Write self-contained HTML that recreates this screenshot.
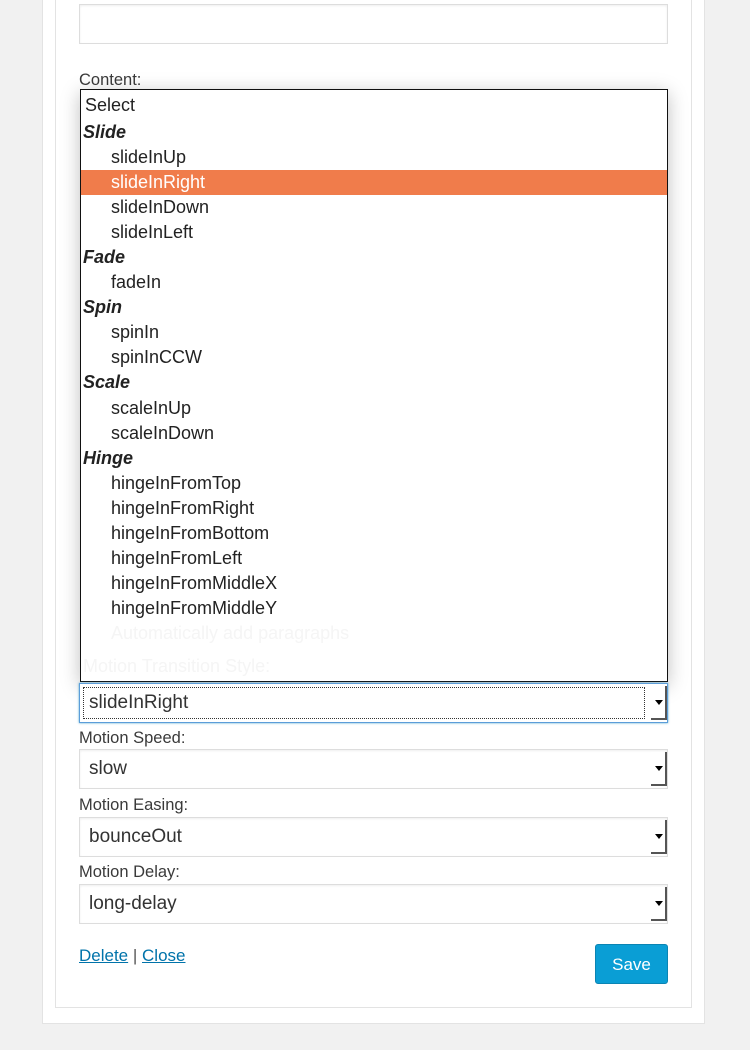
<!DOCTYPE html>
<html><head><meta charset="utf-8"><style>
body{margin:0;width:750px;height:1050px;background:#f1f1f1;font-family:"Liberation Sans",sans-serif;color:#333;position:relative;overflow:hidden}
.a{position:absolute}
.outer{left:42px;top:-5px;width:663px;height:1029px;background:#fff;border:1px solid #e3e3e3;box-sizing:border-box}
.inner{left:55px;top:-5px;width:637px;height:1013px;background:#fff;border:1px solid #e3e3e3;box-sizing:border-box}
.inp{left:79px;width:589px;height:40px;border:1px solid #ddd;box-sizing:border-box;background:#fff;box-shadow:inset 0 1px 2px rgba(0,0,0,.07)}
.lbl{left:79px;font-size:16.5px;color:#3a3a3a}
.sel{font-size:19px;color:#333;padding-left:9px;line-height:38px}
.arr{position:absolute;right:0;top:2px;width:14px;bottom:2px;border-right:2px solid #555;border-bottom:2px solid #555;background:#fff}
.arr:after{content:"";position:absolute;left:4px;top:50%;margin-top:-2px;border-left:4px solid transparent;border-right:4px solid transparent;border-top:5px solid #000}
.list{left:80px;top:89px;width:588px;height:593px;background:#fff;border:1px solid #111;box-sizing:border-box;box-shadow:0 4px 18px rgba(0,0,0,.25);font-size:18px;color:#222;padding-top:3px;overflow:hidden}
.list div{height:25.05px;line-height:25px;white-space:nowrap}
.g{font-weight:bold;font-style:italic;padding-left:2px}
.o{padding-left:30px}
.hl{background:#f07c4b;color:#fff}
a{color:#0073aa;text-decoration:underline}
</style></head><body>
<div class="a outer"></div>
<div class="a inner"></div>
<div class="a inp" style="top:4px"></div>
<div class="a lbl" style="top:71px">Content:</div>
<div class="a list">
<div style="padding-left:4px;height:27px">Select</div>
<div class="g">Slide</div>
<div class="o">slideInUp</div>
<div class="o hl">slideInRight</div>
<div class="o">slideInDown</div>
<div class="o">slideInLeft</div>
<div class="g">Fade</div>
<div class="o">fadeIn</div>
<div class="g">Spin</div>
<div class="o">spinIn</div>
<div class="o">spinInCCW</div>
<div class="g">Scale</div>
<div class="o">scaleInUp</div>
<div class="o">scaleInDown</div>
<div class="g">Hinge</div>
<div class="o">hingeInFromTop</div>
<div class="o">hingeInFromRight</div>
<div class="o">hingeInFromBottom</div>
<div class="o">hingeInFromLeft</div>
<div class="o">hingeInFromMiddleX</div>
<div class="o">hingeInFromMiddleY</div>
<div style="padding-left:30px;color:#f5f5f5">Automatically add paragraphs</div>
<div style="padding-left:2px;color:#f5f5f5;margin-top:8px">Motion Transition Style:</div>
</div>
<div class="a inp sel" style="top:683px;border:1px solid #5b9dd9;box-shadow:0 0 2px rgba(30,140,190,.8)"><span style="position:absolute;left:3px;top:3px;right:22px;bottom:3px;border:1px dotted #333"></span>slideInRight<span class="arr"></span></div>
<div class="a lbl" style="top:729px">Motion Speed:</div>
<div class="a inp sel" style="top:749px">slow<span class="arr"></span></div>
<div class="a lbl" style="top:796px">Motion Easing:</div>
<div class="a inp sel" style="top:817px">bounceOut<span class="arr"></span></div>
<div class="a lbl" style="top:863px">Motion Delay:</div>
<div class="a inp sel" style="top:884px">long-delay<span class="arr"></span></div>
<div class="a" style="left:79px;top:946px;font-size:17px;color:#555"><a>Delete</a> | <a>Close</a></div>
<div class="a" style="left:595px;top:944px;width:73px;height:40px;background:#0a9ed5;border:1px solid #0b84b3;box-sizing:border-box;border-radius:3px;color:#fff;font-size:17px;text-align:center;line-height:40px">Save</div>
</body></html>
